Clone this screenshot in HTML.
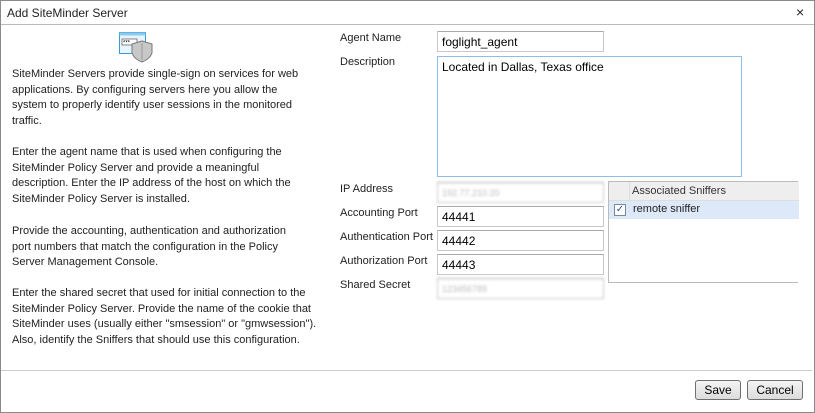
<!DOCTYPE html>
<html><head><style>
body{margin:0;width:815px;height:413px;background:#fff;font-family:"Liberation Sans",sans-serif;font-size:11px;color:#222;position:relative;overflow:hidden}
.a{position:absolute}
.frame{left:0;top:0;width:813px;height:411px;border:1px solid #8a8a8a}
.title{left:1px;top:1px;width:813px;height:23px;border-bottom:1px solid #bbb;background:#fff}
.p{left:12px;white-space:nowrap;line-height:15.6px;color:#222}
.lbl{left:340px}
.in{border:1px solid #c8c8c8;box-sizing:border-box;left:437px;width:167px;height:21px;padding:3px 4px;font-size:12px;color:#000;border-top-color:#aaa}
.blur{color:#bbb;filter:blur(1.2px);font-size:9px;padding-top:5px}
.btn{border:1px solid #707070;border-radius:3px;background:linear-gradient(#f4f4f4,#dcdcdc);height:20px;box-sizing:border-box;text-align:center;line-height:18px;font-size:12px;color:#000}
</style></head><body>
<div class="a frame"></div>
<div class="a title"><span class="a" style="left:6px;top:5px;font-size:12px">Add SiteMinder Server</span><span class="a" style="left:795px;top:3px;font-size:14px">×</span></div>
<svg class="a" style="left:118px;top:30px" width="36" height="34">
<rect x="1.5" y="2.5" width="26" height="21" fill="#e8f4fb" stroke="#3a9ad6"/>
<rect x="1.5" y="2.5" width="26" height="3" fill="#8ccbee"/>
<rect x="4" y="9" width="15" height="6" fill="#fff" stroke="#555" stroke-width=".7"/>
<text x="5" y="14.5" font-size="6" fill="#000">***</text>
<path d="M24 11 L34 14 L34 23 Q32 29 24 32 Q16 29 14 23 L14 14 Z" fill="#c8c8c8" stroke="#777"/>
<path d="M24 13 L24 30" stroke="#999"/>
</svg>
<div class="a p" style="top:67px">SiteMinder Servers provide single-sign on services for web<br>applications. By configuring servers here you allow the<br>system to properly identify user sessions in the monitored<br>traffic.</div>
<div class="a p" style="top:145px">Enter the agent name that is used when configuring the<br>SiteMinder Policy Server and provide a meaningful<br>description. Enter the IP address of the host on which the<br>SiteMinder Policy Server is installed.</div>
<div class="a p" style="top:224px">Provide the accounting, authentication and authorization<br>port numbers that match the configuration in the Policy<br>Server Management Console.</div>
<div class="a p" style="top:286px">Enter the shared secret that used for initial connection to the<br>SiteMinder Policy Server. Provide the name of the cookie that<br>SiteMinder uses (usually either "smsession" or "gmwsession").<br>Also, identify the Sniffers that should use this configuration.</div>

<div class="a lbl" style="top:32px">Agent Name</div>
<div class="a in" style="top:31px">foglight_agent</div>
<div class="a lbl" style="top:56px">Description</div>
<div class="a in" style="top:56px;width:305px;height:121px;border-color:#8fbde3">Located in Dallas, Texas office</div>
<div class="a lbl" style="top:183px">IP Address</div>
<div class="a in blur" style="top:182px">192.77.210.20</div>
<div class="a lbl" style="top:207px">Accounting Port</div>
<div class="a in" style="top:206px">44441</div>
<div class="a lbl" style="top:231px">Authentication Port</div>
<div class="a in" style="top:230px">44442</div>
<div class="a lbl" style="top:255px">Authorization Port</div>
<div class="a in" style="top:254px">44443</div>
<div class="a lbl" style="top:279px">Shared Secret</div>
<div class="a in blur" style="top:278px">123456789</div>

<div class="a" style="left:608px;top:181px;width:190px;height:102px;border:1px solid #bbb;border-right:none;box-sizing:border-box">
<div class="a" style="left:0;top:0;width:190px;height:18px;background:#eee;border-bottom:1px solid #ddd"><div class="a" style="left:20px;top:0;height:18px;border-left:1px solid #ddd"></div><span class="a" style="left:23px;top:3px;color:#333">Associated Sniffers</span></div>
<div class="a" style="left:0;top:19px;width:190px;height:18px;background:#dde8f8"><span class="a" style="left:5px;top:3px;width:10px;height:10px;border:1px solid #7a8a99;background:#fff;font-size:10px;line-height:10px;text-align:center;color:#3a4fa0">✓</span><span class="a" style="left:24px;top:2px">remote sniffer</span></div>
</div>

<div class="a" style="left:1px;top:370px;width:811px;border-top:1px solid #ccc"></div>
<div class="a btn" style="left:695px;top:380px;width:46px">Save</div>
<div class="a btn" style="left:747px;top:380px;width:56px">Cancel</div>
</body></html>
